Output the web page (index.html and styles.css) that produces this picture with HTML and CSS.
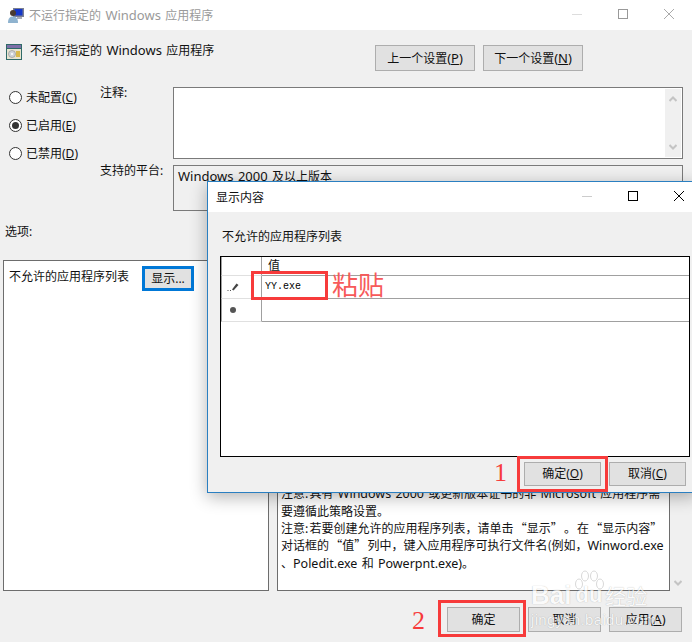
FILE: index.html
```html
<!DOCTYPE html>
<html lang="zh-CN">
<head>
<meta charset="utf-8">
<title>不运行指定的 Windows 应用程序</title>
<link rel="stylesheet" href="styles.css">
</head>
<body>
<div class="main">
  <div class="titlebar">
    <svg class="app-icon" width="16" height="16" viewBox="0 0 16 16"><rect x="5" y="1" width="11" height="9" fill="#7a7f92"/><rect x="6.500" y="2" width="8" height="6.500" fill="#1537c8"/><rect x="9" y="10" width="5" height="2" fill="#a9adb8"/><circle cx="5" cy="6" r="3" fill="#4a3b30"/><path d="M0 16c0-5 2-6.500 5-6.500s5 1.500 5 6.500z" fill="#8fb3cf"/></svg>
    <span class="title-text">不运行指定的<span class="lat"> Windows </span>应用程序</span>
    <div class="win-ctrls">
      <svg width="10" height="10" viewBox="0 0 10 10"><path d="M0 5.500h10" stroke="#ddd"/></svg>
      <svg width="10" height="10" viewBox="0 0 10 10"><rect x=".5" y=".5" width="9" height="9" fill="none" stroke="#999"/></svg>
      <svg width="10" height="10" viewBox="0 0 10 10"><path d="M0 0l10 10M10 0L0 10" stroke="#aaa"/></svg>
    </div>
  </div>

  <div class="body">
    <div class="head-row">
      <svg class="policy-icon" width="16" height="16" viewBox="0 0 16 16"><rect width="16" height="16" fill="#2f6a68"/><rect x="1" y="1" width="14" height="3" fill="#7d6fa8"/><rect x="1" y="5" width="14" height="10" fill="#e8e4d0"/><circle cx="6" cy="10" r="3.500" fill="#cfd3d8" stroke="#8c8c8c" stroke-width=".6"/><circle cx="6" cy="10" r="1" fill="#fff"/><rect x="10" y="7" width="4" height="6" fill="#d9b94c"/></svg>
      <span class="policy-title">不运行指定的<span class="lat"> Windows </span>应用程序</span>
      <div class="nav-btns">
        <button class="btn nav-btn" type="button">上一个设置<span class="lat">(<u>P</u>)</span></button>
        <button class="btn nav-btn" type="button">下一个设置<span class="lat">(<u>N</u>)</span></button>
      </div>
    </div>

    <div class="config">
      <div class="radios">
        <label class="radio"><span class="dot"></span>未配置(<u>C</u>)</label>
        <label class="radio"><span class="dot on"></span>已启用(<u>E</u>)</label>
        <label class="radio"><span class="dot"></span>已禁用(<u>D</u>)</label>
      </div>
      <div class="fields">
        <div class="field-label">注释:</div>
        <div class="box note-box">
          <div class="scrollbar">
            <svg width="8" height="6" viewBox="0 0 8 6"><path d="M.5 5L4 1.500 7.500 5" fill="none" stroke="#c4c4c4" stroke-width="2"/></svg>
            <svg width="8" height="6" viewBox="0 0 8 6"><path d="M.5 1L4 4.500 7.500 1" fill="none" stroke="#c4c4c4" stroke-width="2"/></svg>
          </div>
        </div>
        <div class="field-label">支持的平台:</div>
        <div class="box platform-box"><span class="lat">Windows 2000 </span>及以上版本</div>
      </div>
    </div>

    <div class="options-label">选项:</div>

    <div class="panels">
      <div class="panel left-panel">
        <span>不允许的应用程序列表</span>
        <button class="btn show-btn" type="button">显示...</button>
      </div>
      <div class="panel right-panel">
        <p>注意: 具有<span class="lat"> Windows 2000 </span>或更新版本证书的非<span class="lat"> Microsoft </span>应用程序需</p>
        <p>要遵循此策略设置。</p>
        <p>注意: 若要创建允许的应用程序列表，请单击 “显示” 。 在 “显示内容”</p>
        <p>对话框的 “值” 列中，键入应用程序可执行文件名(例如，<span class="lat">Winword.exe</span></p>
        <p>、<span class="lat">Poledit.exe </span>和<span class="lat"> Powerpnt.exe)</span>。</p>
      </div>
      <svg class="panel-chevron" width="8" height="6" viewBox="0 0 8 6"><path d="M.5 1L4 4.500 7.500 1" fill="none" stroke="#c4c4c4" stroke-width="2"/></svg>
    </div>

    <div class="footer">
      <button class="btn foot-btn" type="button">确定</button>
      <button class="btn foot-btn" type="button">取消</button>
      <button class="btn foot-btn" type="button">应用<span class="lat">(<u>A</u>)</span></button>
    </div>
  </div>
</div>

<div class="dialog">
  <div class="dialog-title">
    <span>显示内容</span>
    <div class="win-ctrls">
      <svg width="10" height="10" viewBox="0 0 10 10"><path d="M0 5.500h10" stroke="#ccc"/></svg>
      <svg width="10" height="10" viewBox="0 0 10 10"><rect x=".5" y=".5" width="9" height="9" fill="none" stroke="#000"/></svg>
      <svg width="10" height="10" viewBox="0 0 10 10"><path d="M0 0l10 10M10 0L0 10" stroke="#000"/></svg>
    </div>
  </div>
  <div class="dialog-body">
    <div class="dialog-label">不允许的应用程序列表</div>
    <div class="grid">
      <div class="g-row g-head"><div class="g-side"></div><div class="g-cell">值</div></div>
      <div class="g-row"><div class="g-side"><span class="g-ico"><svg width="12" height="8" viewBox="0 0 12 8"><path d="M5 6.500L9.500.5 11.500 2 6.500 7.500z" fill="#444"/><path d="M.5 7.500h1M3 7.500h1" stroke="#555"/></svg></span></div><div class="g-cell g-val">YY.exe</div></div>
      <div class="g-row"><div class="g-side"><span class="g-ico"><span class="g-star"></span></span></div><div class="g-cell"></div></div>
    </div>
    <div class="dialog-foot">
      <button class="btn dlg-btn" type="button">确定(<u>O</u>)</button>
      <button class="btn dlg-btn" type="button">取消(<u>C</u>)</button>
    </div>
  </div>
</div>

<div class="mark mark-paste"></div>
<div class="mark-text paste-text">粘贴</div>
<div class="mark mark-ok1"></div>
<div class="mark-num num1">1</div>
<div class="mark mark-ok2"></div>
<div class="mark-num num2">2</div>

<div class="watermark">
  <svg class="paw" width="32" height="30" viewBox="0 0 32 30"><g fill="#fff" stroke="#bbb" stroke-width=".8"><ellipse cx="6" cy="14" rx="3.500" ry="5"/><ellipse cx="12" cy="6" rx="3.500" ry="5"/><ellipse cx="21" cy="6" rx="3.500" ry="5"/><ellipse cx="27" cy="14" rx="3.500" ry="5"/></g></svg>
  <div class="wm-line"><span>Bai</span><span class="wm-du">du</span><span class="wm-cn">经验</span></div>
  <div class="wm-url">jingyan.baidu.com</div>
</div>
</body>
</html>
```

FILE: styles.css
```css
* { box-sizing: border-box; }
html, body { margin: 0; padding: 0; }
body {
  width: 692px;
  height: 642px;
  overflow: hidden;
  position: relative;
  background: #f0f0f0;
  color: #111;
  font: 12px/17px "Noto Sans", "Noto Sans CJK SC", sans-serif;
}
u { text-underline-offset: 1px; }
p { margin: 0; white-space: pre; word-spacing: -1.5px; }
.lat { font-size: 13px; word-spacing: 1px; }

.main { width: 692px; height: 642px; }

.titlebar {
  height: 30px;
  background: #fff;
  display: flex;
  align-items: center;
  padding-left: 8px;
}
.app-icon { margin-right: 5px; }
.title-text { color: #9a9a9a; }
.win-ctrls { margin: 0 0 2px auto; display: flex; gap: 36px; padding-right: 18px; }

.body { height: 612px; display: flex; flex-direction: column; }

.head-row {
  height: 57px;
  display: flex;
  align-items: flex-start;
  padding: 14px 109px 0 6px;
}
.policy-icon { flex: none; }
.policy-title { margin-left: 8px; line-height: 12px; white-space: pre; }
.nav-btns { margin-left: auto; display: flex; gap: 8px; margin-top: 1px; }

.btn {
  font: inherit;
  color: #111;
  background: #e1e1e1;
  border: 1px solid #adadad;
  padding: 0;
  line-height: 1;
}
.nav-btn { width: 100px; height: 26px; }

.config { display: flex; height: 124px; }
.radios { width: 100px; padding-left: 9px; display: flex; flex-direction: column; gap: 7px; }
.radio { display: flex; align-items: center; height: 21px; }
.dot {
  width: 13px;
  height: 13px;
  border: 1px solid #333;
  border-radius: 50%;
  background: #fff;
  margin-right: 4px;
  display: flex;
  align-items: center;
  justify-content: center;
}
.dot.on::after {
  content: "";
  width: 7px;
  height: 7px;
  border-radius: 50%;
  background: #333;
}

.fields {
  display: grid;
  grid-template-columns: 73px 510px;
  grid-template-rows: 72px 46px;
  row-gap: 6px;
}
.field-label { line-height: 12px; }
.box { border: 1px solid #7a7a7a; }
.note-box { background: #fff; display: flex; justify-content: flex-end; padding: 1px; }
.scrollbar {
  width: 16px;
  background: #f0f0f0;
  display: flex;
  flex-direction: column;
  justify-content: space-between;
  align-items: center;
  padding: 7px 0;
}
.platform-box { background: #f0f0f0; padding: 2px 4px; }

.options-label { height: 49px; padding: 15px 0 0 5px; line-height: 12px; }

.panels { position: relative; display: flex; height: 331px; padding-left: 3px; gap: 8px; }
.panel { background: #fff; border: 1px solid #6d6d6d; height: 331px; }
.left-panel { width: 266px; display: flex; align-items: flex-start; padding: 5px 0 0 5px; gap: 13px; }
.left-panel span { padding-top: 2px; }
.show-btn { width: 52px; height: 25px; border: 2px solid #0078d7; box-shadow: inset 0 0 0 1px #0078d7; }
.right-panel {
  width: 393px;
  padding: 223px 0 0 3px;
  overflow: hidden;
  font-family: "Noto Sans CJK SC", sans-serif;
}
.right-panel .lat { font-family: "Noto Sans", sans-serif; font-size: 12.5px; }
.panel-chevron { position: absolute; left: 674px; top: 320px; }

.footer { display: flex; gap: 8px; justify-content: flex-end; padding: 16px 10px 0 0; }
.foot-btn { width: 73px; height: 25px; }

.dialog {
  position: absolute;
  left: 207px;
  top: 181px;
  width: 490px;
  height: 312px;
  background: #f0f0f0;
  border: 1px solid #2a7fc1;
  box-shadow: 0 4px 16px rgba(0, 0, 0, .3);
  display: flex;
  flex-direction: column;
}
.dialog-title {
  height: 30px;
  background: #fff;
  display: flex;
  align-items: center;
  padding-left: 8px;
  flex: none;
}
.dialog-title .win-ctrls { padding-right: 12px; }
.dialog-body { flex: 1; padding: 16px 0 0 12px; }
.dialog-label { height: 28px; padding-left: 2px; }
.grid {
  width: 470px;
  height: 201px;
  background: #fff;
  border: 1px solid #000;
}
.g-row { display: flex; height: 23px; }
.g-head { height: 19px; }
.g-side {
  width: 41px;
  background: #fff;
  border-left: 1px solid #a0a0a0;
  border-right: 1px solid #a0a0a0;
  border-bottom: 1px solid #e0e0e0;
  display: flex;
  align-items: center;
  padding-left: 4px;
}
.g-ico { width: 14px; display: flex; justify-content: center; }
.g-cell {
  flex: 1;
  border-bottom: 1px solid #a0a0a0;
  padding-left: 6px;
  line-height: 18px;
}
.g-val {
  padding: 4px 0 0 3px;
  color: #000;
  font: 10px/14px "Liberation Mono", monospace;
}
.g-star { width: 6px; height: 6px; border-radius: 50%; background: #555; }
.dialog-foot { display: flex; justify-content: flex-end; gap: 8px; padding: 5px 10px 0 0; }
.dlg-btn { width: 77px; height: 24px; }

.mark { position: absolute; border: 3px solid #f73b3b; }
.mark-paste { left: 251px; top: 271px; width: 77px; height: 29px; }
.mark-ok1 { left: 517px; top: 456px; width: 91px; height: 36px; }
.mark-ok2 { left: 438px; top: 600px; width: 88px; height: 37px; }
.mark-text { position: absolute; color: #f75a5a; }
.paste-text { left: 332px; top: 270px; font-size: 26px; line-height: 30px; }
.mark-num { position: absolute; color: #f73b3b; font: 26px/28px "Liberation Serif", serif; }
.num1 { left: 494px; top: 459px; }
.num2 { left: 412px; top: 607px; }

.watermark {
  position: absolute;
  left: 530px;
  top: 570px;
  width: 130px;
  height: 62px;
  color: #fff;
  opacity: .7;
  pointer-events: none;
  text-shadow: 0 0 1px rgba(0, 0, 0, .4);
}
.paw { position: absolute; left: 43px; top: 0; }
.wm-line {
  position: absolute;
  top: 11px;
  left: 1px;
  display: flex;
  align-items: center;
  font: bold 26px/28px "Liberation Sans", sans-serif;
  white-space: nowrap;
}
.wm-du { font-size: 22px; margin: 0 3px 0 4px; }
.wm-cn { font: 21px/28px "Noto Sans CJK SC", sans-serif; }
.wm-url { position: absolute; top: 41px; left: 1px; font: 15px/18px "Liberation Sans", sans-serif; white-space: nowrap; letter-spacing: .3px; }
```
